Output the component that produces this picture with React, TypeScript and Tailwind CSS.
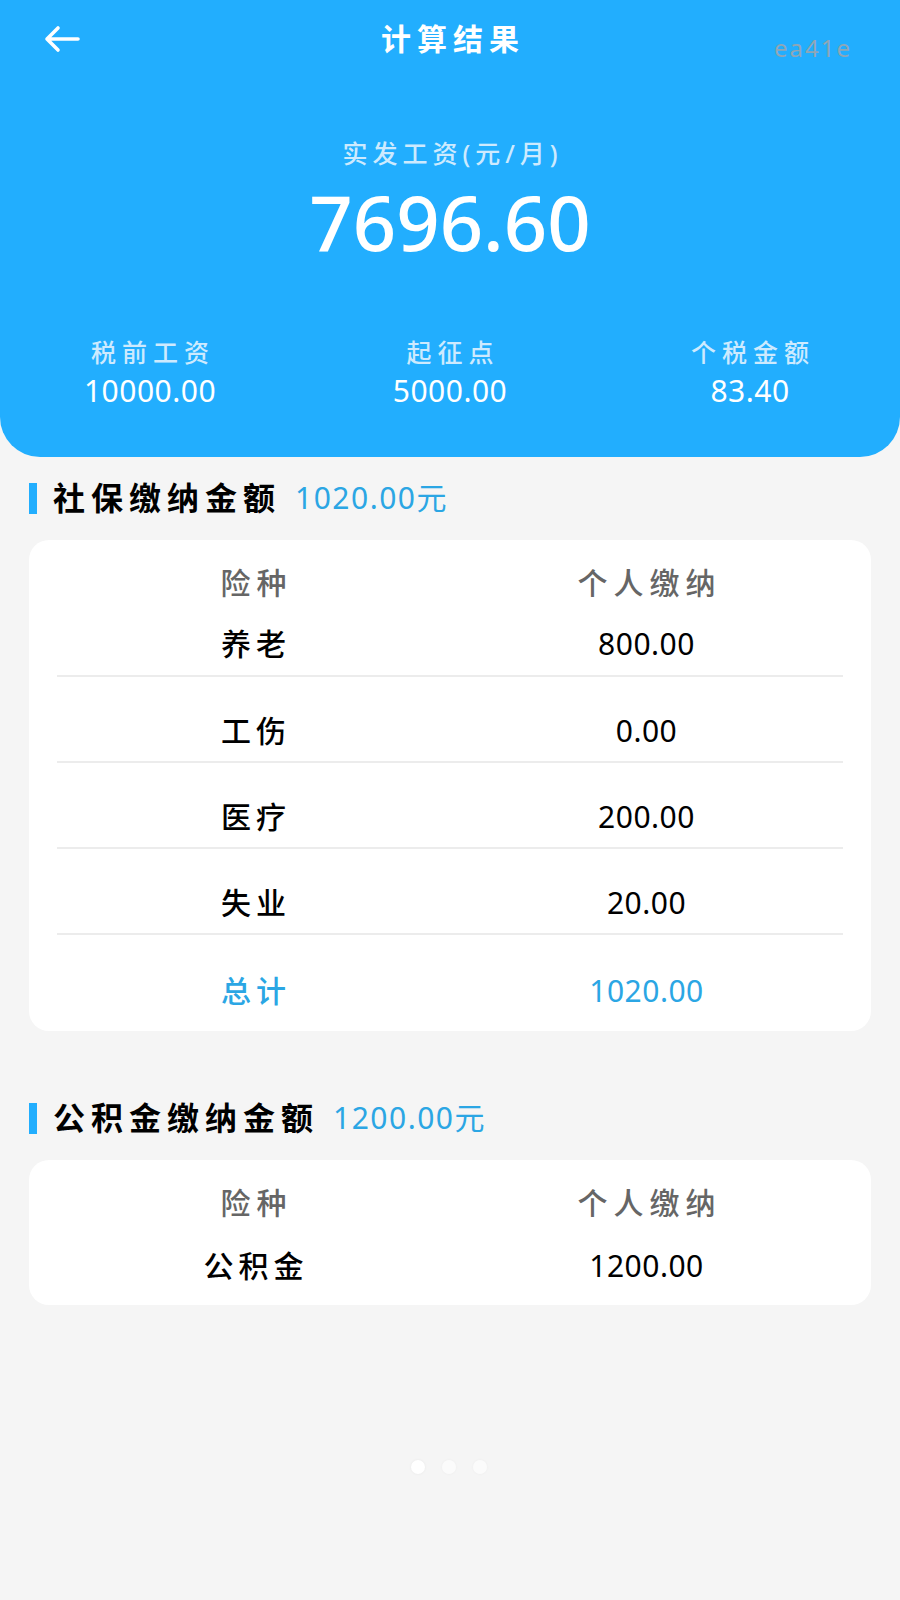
import { Fragment } from 'react';

type Row = { name: string; amount: string };

const socialRows: Row[] = [
  { name: '养老', amount: '800.00' },
  { name: '工伤', amount: '0.00' },
  { name: '医疗', amount: '200.00' },
  { name: '失业', amount: '20.00' },
];

const font = { fontFamily: '"Noto Sans", "Noto Sans CJK SC", sans-serif' };

function BackArrow() {
  return (
    <svg width="36" height="28" viewBox="0 0 36 28" fill="none">
      <path
        d="M34 14H3M14 3L3 14L14 25"
        stroke="white"
        strokeWidth="3.6"
        strokeLinecap="round"
        strokeLinejoin="round"
      />
    </svg>
  );
}

function SectionTitle({ title, amount }: { title: string; amount: string }) {
  return (
    <div className="flex h-[40px] items-center pl-[29px]">
      <div className="h-[31px] w-[8px] bg-[#22aefe]" />
      <span className="ml-[16px] text-[32px] font-bold leading-none tracking-[6px] text-black">{title}</span>
      <span className="ml-[14px] text-[30px] leading-none tracking-[1.5px] text-[#2ba6e4]">{amount}</span>
    </div>
  );
}

function HeadRow() {
  return (
    <div className="grid h-[58px] grid-cols-2 items-center text-[30px] font-medium leading-none text-[#666666]">
      <div className="pl-[6px] text-center tracking-[6px]">险种</div>
      <div className="pl-[6px] text-center tracking-[6px]">个人缴纳</div>
    </div>
  );
}

export default function App() {
  return (
    <div className="min-h-[1600px] w-full bg-[#f5f5f5]" style={font}>
      {/* Header */}
      <div className="h-[457px] rounded-b-[40px] bg-[#22aefe] text-white">
        <div className="relative flex h-[78px] items-center justify-center">
          <div className="absolute left-[44px] top-[25px]">
            <BackArrow />
          </div>
          <span className="pl-[6px] text-[30px] font-bold leading-none tracking-[6px]">计算结果</span>
          <span className="absolute right-[48px] top-[36px] text-[24px] leading-none tracking-[2px] text-[#8fa6b6]">
            ea41e
          </span>
        </div>

        <div className="mt-[58px] flex h-[34px] items-center justify-center pl-[5px] text-[25px] font-medium leading-none tracking-[5px] text-[#cdeafe]">
          实发工资(元/月)
        </div>
        <div className="mt-[7px] flex h-[90px] items-center justify-center text-[76px] font-medium leading-none">
          7696.60
        </div>

        <div className="mt-[68px] grid grid-cols-3">
          {[
            ['税前工资', '10000.00'],
            ['起征点', '5000.00'],
            ['个税金额', '83.40'],
          ].map(([label, value]) => (
            <div key={label} className="flex flex-col items-center">
              <div className="flex h-[34px] items-center pl-[6px] text-[25px] font-medium leading-none tracking-[6px] text-[#cdeafe]">
                {label}
              </div>
              <div className="mt-[4px] flex h-[36px] items-center text-[30px] leading-none tracking-[0.5px]">{value}</div>
            </div>
          ))}
        </div>
      </div>

      {/* Social insurance */}
      <div className="mt-[21px]">
        <SectionTitle title="社保缴纳金额" amount="1020.00元" />
      </div>
      <div className="mx-[29px] mt-[22px] rounded-[20px] bg-white px-[28px] pt-[14px]">
        <HeadRow />
        {socialRows.map((r, i) => (
          <Fragment key={r.name}>
            <div
              className={
                i === 0
                  ? 'grid h-[65px] grid-cols-2 items-center border-b-2 border-[#ececec] text-[30px] leading-none text-black'
                  : 'grid h-[86px] grid-cols-2 items-center border-b-2 border-[#ececec] pt-[24px] text-[30px] leading-none text-black'
              }
            >
              <div className="pl-[5px] text-center font-medium tracking-[5px]">{r.name}</div>
              <div className="text-center tracking-[0.5px]">{r.amount}</div>
            </div>
          </Fragment>
        ))}
        <div className="grid h-[96px] grid-cols-2 items-center pb-[8px] pt-[24px] text-[30px] leading-none text-[#2ba6e4]">
          <div className="pl-[5px] text-center font-medium tracking-[5px]">总计</div>
          <div className="text-center tracking-[0.5px]">1020.00</div>
        </div>
      </div>

      {/* Housing fund */}
      <div className="mt-[67px]">
        <SectionTitle title="公积金缴纳金额" amount="1200.00元" />
      </div>
      <div className="mx-[29px] mt-[22px] rounded-[20px] bg-white px-[28px] pt-[14px]">
        <HeadRow />
        <div className="grid h-[73px] grid-cols-2 items-center pb-[5px] text-[30px] leading-none text-black">
          <div className="pl-[5px] text-center font-medium tracking-[5px]">公积金</div>
          <div className="text-center tracking-[0.5px]">1200.00</div>
        </div>
      </div>

      {/* Pager dots */}
      <div className="mt-[155px] flex justify-center gap-[17px] pr-[2px]">
        <div className="h-[14px] w-[14px] rounded-full bg-white shadow-[0_0_3px_rgba(0,0,0,0.06)]" />
        <div className="h-[14px] w-[14px] rounded-full bg-white/60 shadow-[0_0_3px_rgba(0,0,0,0.04)]" />
        <div className="h-[14px] w-[14px] rounded-full bg-white/60 shadow-[0_0_3px_rgba(0,0,0,0.04)]" />
      </div>
    </div>
  );
}
